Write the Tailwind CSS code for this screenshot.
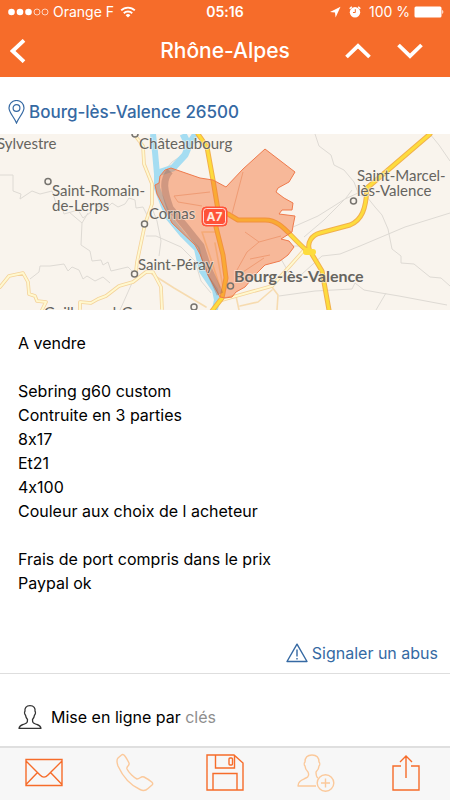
<!DOCTYPE html>
<html lang="fr">

<head>
    <meta charset="UTF-8">
    <meta name="viewport" content="width=device-width, initial-scale=1.0">
    <title>Rhône-Alpes</title>
    <script src="https://cdn.jsdelivr.net/npm/@tailwindcss/browser@4"></script>
</head>

<body class="flex min-h-screen flex-col bg-white font-['Inter','Noto_Sans',sans-serif] text-black [font-feature-settings:'calt'_0]">
    <header class="bg-[#f66c2a] text-white">
        <!-- Status bar -->
        <div class="relative flex h-6 items-center justify-between pr-1.5 pl-2 text-sm">
            <div class="flex items-center gap-1">
                <svg class="h-2 w-[41px]" viewBox="0 0 41 8" fill="currentColor">
                    <circle cx="3.5" cy="4" r="3.3" />
                    <circle cx="12" cy="4" r="3.3" />
                    <circle cx="20.5" cy="4" r="3.3" />
                    <circle cx="29" cy="4" r="3" fill="none" stroke="currentColor" stroke-width=".7" />
                    <circle cx="37" cy="4" r="3" fill="none" stroke="currentColor" stroke-width=".7" />
                </svg>
                <span>Orange F</span>
                <svg class="ml-0.5 h-3 w-4" viewBox="0 0 16 12" fill="none" stroke="currentColor" stroke-width="1.9">
                    <path d="M1.2 4.4a9.6 9.6 0 0 1 13.6 0M3.8 7.2a6 6 0 0 1 8.4 0" />
                    <path d="M8 11.6 5.6 9.2a3.4 3.4 0 0 1 4.8 0z" fill="currentColor" stroke="none" />
                </svg>
            </div>
            <span class="absolute inset-x-0 text-center font-semibold">05:16</span>
            <div class="flex items-center gap-1">
                <svg class="h-3 w-3" viewBox="0 0 12 12" fill="currentColor">
                    <path d="M11.5.8 1 6l5 .5.6 5z" />
                </svg>
                <svg class="ml-1 h-3 w-3" viewBox="0 0 12 12">
                    <circle cx="6" cy="6.3" r="5.2" fill="currentColor" />
                    <path d="M.7 2.8 2.8.8M11.3 2.8 9.2.8" stroke="currentColor" stroke-width="1.5" />
                    <path d="M6.3 3.2v3.3H4" fill="none" stroke="#f66c2a" />
                </svg>
                <span class="ml-1">100 %</span>
                <svg class="h-3 w-[30px]" viewBox="0 0 30 12" fill="currentColor">
                    <rect x=".5" y=".5" width="27" height="11" rx="1.5" />
                    <path d="M28.3 3.8q2 2.2 0 4.4z" />
                </svg>
            </div>
        </div>

        <!-- Navigation bar -->
        <nav class="relative flex h-[53px] items-center justify-between px-2">
            <button aria-label="Retour" class="p-0.5">
                <svg class="h-6 w-4" viewBox="0 0 16 24" fill="none" stroke="currentColor" stroke-width="3.8">
                    <path d="M14 1.3 2.6 12 14 22.7" />
                </svg>
            </button>
            <h1 class="pointer-events-none absolute inset-x-0 text-center text-[21px] font-medium">Rhône-Alpes</h1>
            <div class="flex gap-6 pr-[18px]">
                <button aria-label="Annonce précédente">
                    <svg class="h-4 w-7" viewBox="0 0 28 16" fill="none" stroke="currentColor" stroke-width="3.8">
                        <path d="M2.5 14 14 3l11.5 11" />
                    </svg>
                </button>
                <button aria-label="Annonce suivante">
                    <svg class="h-4 w-7" viewBox="0 0 28 16" fill="none" stroke="currentColor" stroke-width="3.8">
                        <path d="M2.5 2 14 13 25.5 2" />
                    </svg>
                </button>
            </div>
        </nav>
    </header>

    <main class="flex grow flex-col">
        <a href="#carte" class="flex items-center gap-1 px-2 pt-[23px] pb-[10px] text-[17px] leading-6 font-medium text-[#3569a3]">
            <svg class="h-6 w-[17px]" viewBox="0 0 17 24" fill="none" stroke="currentColor" stroke-width="1.2">
                <path d="M8.5 23C6 17 1 12.5 1 8a7.5 7.5 0 0 1 15 0c0 4.5-5 9-7.5 15z" />
                <circle cx="8.5" cy="8" r="3.4" />
            </svg>
            Bourg-lès-Valence 26500
        </a>

        <!-- Map -->
        <svg id="carte" class="h-[176px] w-full" viewBox="0 0 450 176" preserveAspectRatio="xMidYMid slice" fill="none" stroke-linejoin="round" role="img" aria-label="Carte de Bourg-lès-Valence">
            <rect width="450" height="176" fill="#f9f4ed" />
            <!-- Small roads and limits -->
            <g stroke="#dedad4">
                <path d="M0 41h13v16l8 3-1 5 12-8 8 3 12-3 4 12 6 4 2 7 14-4 5 8 8-6 1-8 14 5 6-6 6 4 7-3 4-6 6 2 1 8 7-1 4 8 5-2M69 78l13 11 6-10M82 89l-1 22 9 6 2 10 9-1 2 5 5-3 3 9 17-4 5 5M30 145l9-7 1-6h10l14-2 4 7 4-4 7 3 4 9 4-3 8 5 8-4 7 6M152 74l5 13 4 20-2 15M146 102h10l25 11 14 14 6 20 10 12M132 149l-12 27M162 40l10-12 9-6" />
                <path d="M315 0l4 12 12 9 3 10 10 5 10 12 5 13 8 2 8 10 7 8 6 14 4 20 9 7v7l13 1 16 13 11 1 9 8 16 3M293 93l25-11 27-17 13-6M304 103l20-17 22-22 6-8M293 112h9M302 140l20-18 18-2 20-8 45-19 45-14M279 162l36-5 37-2 3-6 9 7 17 3 18 3 48 9M386 159l-10 17M430 0l9 11 11 16M281 125l8 14" />
            </g>
            <!-- Rhône -->
            <g stroke="#a5ddf2">
                <path d="M153 0l2 18 2 22v14l6 16 6 14 14 17 14 14 5 22 13 19 2 10-3 14" stroke-width="6" />
                <path d="M155 40l18-6 12-13 5-12 6-9M183 0l6 12" stroke-width="7" />
            </g>
            <!-- Secondary roads -->
            <g stroke-linecap="round">
                <path d="M152 140l22 14 32 19M272 153l6 8-1 15M236 162l3 14M240 172l18-4 14-12M224 159l-9-50M202 98l18 55M203 98h14" stroke="#f6dbb0" stroke-width="1.6" />
                <path d="M134 0l9 12 1 18 8 20v20l-7 20-8 38-1 9M0 153l9-11 14-3 5 9 1 12 6 2 2 5 9 1-4 8M80 176v-8l11 1 7-4 8-3 13-10 14-4 13-10h7l8 15 1 23M222 166l50-14 34-38" stroke="#f4d29a" stroke-width="3.6" />
                <path d="M134 0l9 12 1 18 8 20v20l-7 20-8 38-1 9M0 153l9-11 14-3 5 9 1 12 6 2 2 5 9 1-4 8M80 176v-8l11 1 7-4 8-3 13-10 14-4 13-10h7l8 15 1 23M222 166l50-14 34-38" stroke="#fff8cf" stroke-width="2" />
            </g>
            <!-- Motorway -->
            <g stroke-linecap="round">
                <path d="M198 0l9 13 6 33 5 30-2 17 7 28 3 23-4 20-10 13M218 76l10 4 10 6h27c16 0 23 14 40 29l5 2 12 20 7 39M310 117c-4-8 2-16 10-18l30-8c12-5 16-16 17-37L430 0" stroke="#f2b04c" stroke-width="5" />
                <path d="M198 0l9 13 6 33 5 30-2 17 7 28 3 23-4 20-10 13M218 76l10 4 10 6h27c16 0 23 14 40 29l5 2 12 20 7 39M310 117c-4-8 2-16 10-18l30-8c12-5 16-16 17-37L430 0" stroke="#fddc3d" stroke-width="3" />
                <path d="M306 118h7" stroke="#fddc3d" stroke-width="6" />
            </g>
            <!-- Local roads inside the town -->
            <path d="M232 80l11-42M174 62l36-4M174 62l4 6 24 4M245 98l14 10-12 10-10 18M259 108l22-6M250 125l20-4M240 140l24-16" stroke="#ecc2ac" />
            <!-- Town limits -->
            <path d="M171 34l29 10 13 2 13 7 17-18 22-20 30 23-6 10-11 6-2 4 8 6 9 5-1 7h-10l-3 4 16 2-2 10-1 6-11 7 8 2 5 6-6 8-8 6-15 4-9 9-11 13-9 5-4 5-7 1-5-1-12-22-8-21-5-9-23-22-7-14-8-15-2-9 4-2 1-7 5-6z" fill="#f4682a" fill-opacity=".43" stroke="#ef7a4c" />
            <path d="M170 37c-8 9-6 20 0 37l15 18 16 20 7 22 12 26" stroke="#96695c" stroke-opacity=".4" stroke-width="7" />
            <!-- Places -->
            <g fill="#f9f4ed" stroke="#77746f" stroke-width="1.5">
                <circle cx="135" cy="0" r="3" />
                <circle cx="48" cy="47.5" r="3" />
                <circle cx="144.5" cy="90" r="3" />
                <circle cx="134.5" cy="140" r="3" />
                <circle cx="353.5" cy="67" r="3" />
                <circle cx="230.5" cy="152" r="3" fill="#f7bd9c" />
                <circle cx="194" cy="173" r="3" />
            </g>
            <g class="font-['Lato','Noto_Sans',sans-serif] text-[15px]" fill="#66645f" stroke="#f9f4ed" stroke-width="2" stroke-opacity=".5" paint-order="stroke">
                <text x="-3" y="15">Sylvestre</text>
                <text x="139" y="15">Châteaubourg</text>
                <text x="52" y="62">Saint-Romain-</text>
                <text x="52" y="77">de-Lerps</text>
                <text x="149" y="85">Cornas</text>
                <text x="138" y="136">Saint-Péray</text>
                <text x="357" y="47">Saint-Marcel-</text>
                <text x="357" y="62">lès-Valence</text>
                <text x="234" y="148" class="text-base font-bold">Bourg-lès-Valence</text>
                <text x="44" y="184">Guilherand-Granges</text>
            </g>
            <rect x="202" y="73" width="25" height="19" rx="4" fill="#ff5238" stroke="#ff5238" />
            <rect x="203.5" y="74.5" width="22" height="16" rx="3" stroke="#fff" stroke-opacity=".8" />
            <text x="214.5" y="87" text-anchor="middle" class="text-xs font-bold" fill="#ffe9dc">A7</text>
        </svg>

        <p class="px-[18px] pt-[21px] text-base leading-6">
            A vendre<br><br>
            Sebring g60 custom<br>
            Contruite en 3 parties<br>
            8x17<br>
            Et21<br>
            4x100<br>
            Couleur aux choix de l acheteur<br><br>
            Frais de port compris dans le prix<br>
            Paypal ok
        </p>

        <div class="mt-[46px] flex justify-end border-b border-[#dedede] px-3 pb-2">
            <a href="#abus" class="flex items-center gap-1 text-base leading-6 text-[#3569a3]">
                <svg class="h-5 w-[22px]" viewBox="0 0 22 20" fill="none" stroke="currentColor" stroke-width="1.4" stroke-linejoin="round">
                    <path d="M11 1.2 21 18.5H1zM11 6.5v7M11 15v1.5" />
                </svg>
                Signaler un abus
            </a>
        </div>

        <div class="flex grow items-center gap-[9px] px-[18px] pt-3.5 text-base">
            <svg class="h-6 w-6" viewBox="0 0 24 24" fill="none" stroke="#333" stroke-width="1.3" stroke-linejoin="round">
                <path d="M12 .7c-4 0-5.5 2.5-5 5.5-.8 1-.5 3 .5 4 .3 2 1 3.3 2 4.3 0 3-.5 3.5-3 4.500-3 1.200-5 1.500-5.500 4.300h22c-.5-2.800-2.500-3.100-5.500-4.300-2.500-1-3-1.500-3-4.500 1-1 1.700-2.300 2-4.300 1-1 1.300-3 .5-4 .5-3-1-5.500-5-5.500z" />
            </svg>
            <p>Mise en ligne par <span class="text-[#8e8e8e]">clés</span></p>
        </div>
    </main>

    <!-- Toolbar -->
    <footer class="flex h-[54px] items-center justify-between border-t-2 border-[#dfdfdf] bg-[#f7f7f7] px-6 pb-1 text-[#f66c2a]">
        <button aria-label="Envoyer un e-mail">
            <svg class="h-10 w-10" viewBox="0 0 40 40" fill="none" stroke="currentColor" stroke-width="1.4">
                <path d="M2 7.5h36v26H2zM2 9l14 14c3 3 5 3 8 0L38 9M2 32.5l11.5-12M38 32.5l-11.5-12" />
            </svg>
        </button>
        <button aria-label="Appeler" class="text-[#fbc99b]">
            <svg class="h-10 w-10" viewBox="0 0 40 40" fill="none" stroke="currentColor" stroke-width="1.4" stroke-linejoin="round">
                <path d="M6.5 3 3 6c-2 2-1 5 0 8 5 11 12 19 22 23.5 4 2 6 1 8-1l4-3.5c1-1 .7-2 0-2.7-3-2.5-5-3.8-8-5.3-3-1.5-4 2-7 2-3-1.5-8-6-10-10-1-3 3-3 2-6-1.500-3-3-6-5-8-1-.7-1.700-.7-2.500 0z" />
            </svg>
        </button>
        <button aria-label="Sauvegarder">
            <svg class="h-10 w-10" viewBox="0 0 40 40" fill="none" stroke="currentColor" stroke-width="1.4">
                <path d="M2 3h27l9 8v27H2zM10.5 3v13h19V3M8 38V21.5h24V38" />
                <rect x="24" y="6" width="3.5" height="7" rx="1" />
            </svg>
        </button>
        <button aria-label="Suivre le vendeur" class="text-[#fbc99b]">
            <svg class="h-10 w-10" viewBox="0 0 40 40" fill="none" stroke="currentColor" stroke-width="1.4" stroke-linejoin="round">
                <path d="M20 34H2c0-5 4-6 8-8 3-1 3-4 2-6-2-2-3-4-3-6-1-1-1-3 0-4 0-5 3-7 7-7s7 2 7 7c1 1 1 3 0 4 0 2-1 4-3 6 0 3 0 5 2 6" />
                <circle cx="29.5" cy="31" r="8.3" />
                <path d="M29.5 26.5v9M25 31h9" />
            </svg>
        </button>
        <button aria-label="Partager">
            <svg class="h-10 w-10" viewBox="0 0 40 40" fill="none" stroke="currentColor" stroke-width="1.4">
                <path d="M15 14H7v24h26V14h-8M20 26V4M14 10l6-6 6 6" />
            </svg>
        </button>
    </footer>
</body>

</html>
